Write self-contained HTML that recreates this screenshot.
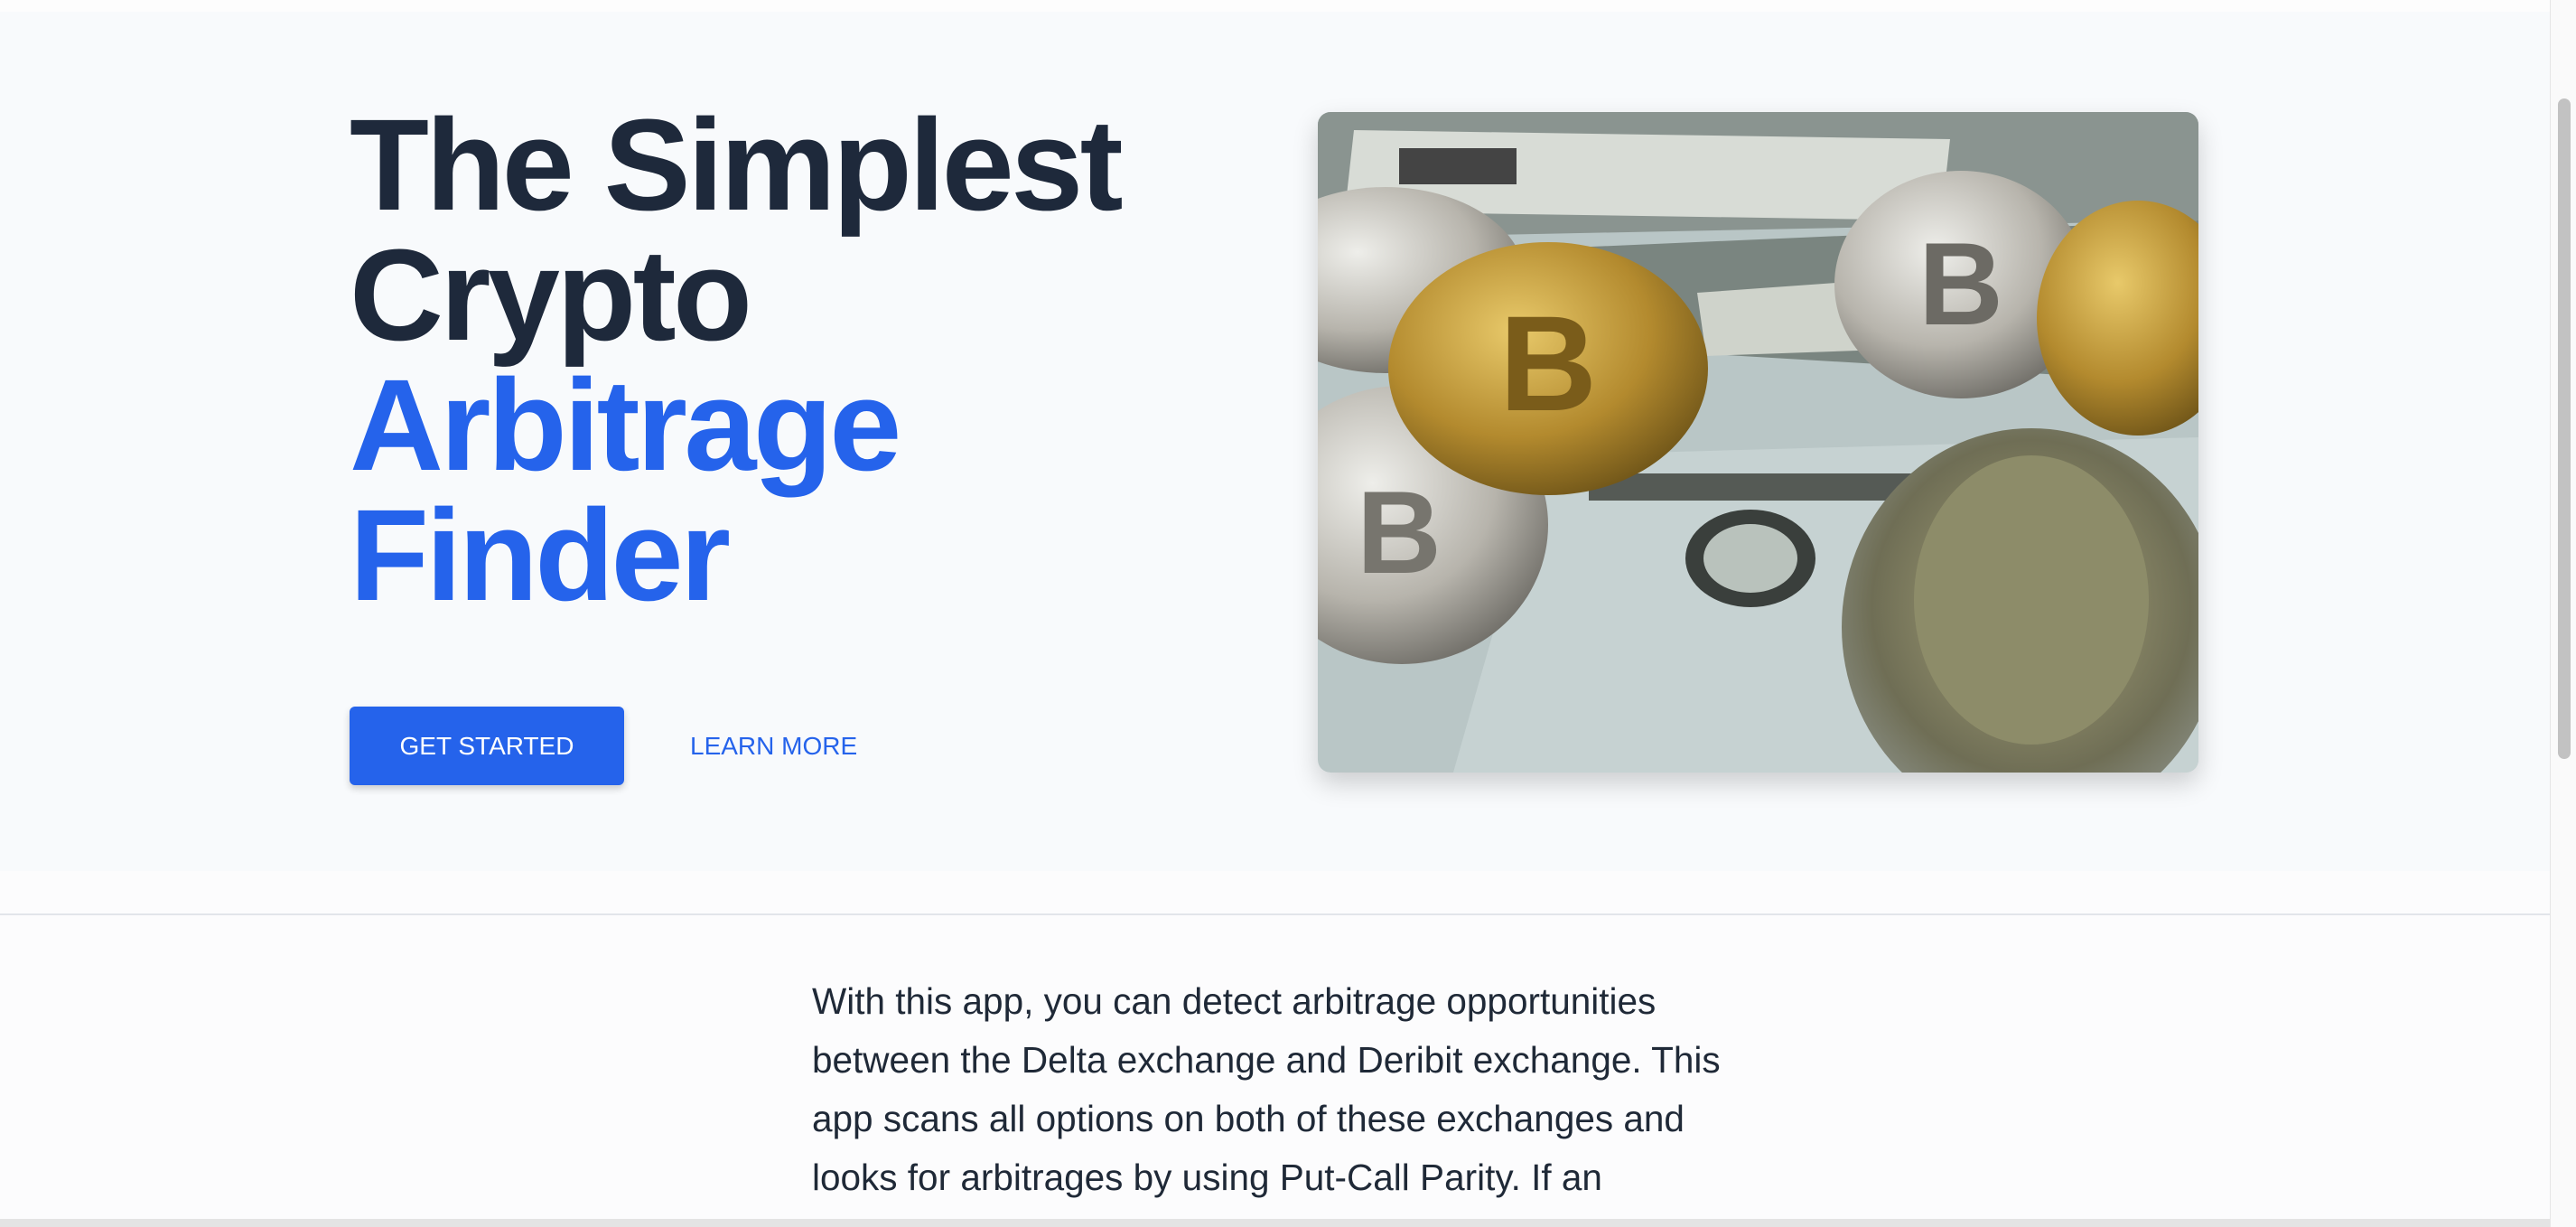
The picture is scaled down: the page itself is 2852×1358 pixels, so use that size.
<!DOCTYPE html>
<html><head><meta charset="utf-8"><style>
*{margin:0;padding:0;box-sizing:border-box}
html,body{width:2852px;height:1358px;overflow:hidden;background:#fcfcfd;font-family:"Liberation Sans",Helvetica,Arial,sans-serif}
.topstrip{position:absolute;left:0;top:0;width:2823px;height:13px;background:#fdfdfd}
.hero{position:absolute;left:0;top:13px;width:2823px;height:951px;background:#f8fafc}
h1{position:absolute;left:387px;top:111px;font-size:144px;line-height:144px;font-weight:700;letter-spacing:-3.6px;color:#1e293b;white-space:nowrap}
h1 .b{color:#2563eb}
.btn{position:absolute;left:387px;top:782px;width:304px;height:87px;background:#2563eb;border-radius:6px;box-shadow:0 4px 8px rgba(0,0,0,.18);color:#fff;font-size:28px;line-height:87px;text-align:center}
.lm{position:absolute;left:764px;top:782px;height:87px;line-height:87px;color:#2563eb;font-size:28px}
.img{position:absolute;left:1459px;top:124px;width:975px;height:731px;border-radius:14px;overflow:hidden;box-shadow:0 12px 28px rgba(0,0,0,.18)}
.line{position:absolute;left:0;top:1011px;width:2823px;height:2px;background:#e2e5ea}
p{position:absolute;left:899px;top:1076px;font-size:40.5px;line-height:65px;color:#1f2937;white-space:nowrap}
.sb{position:absolute;left:2823px;top:0;width:29px;height:1358px;background:#fafafa;border-left:1px solid #e6e6e6}
.th{position:absolute;left:2832px;top:109px;width:14px;height:731px;background:#c2c2c2;border-radius:7px}
.hb{position:absolute;left:0;top:1349px;width:2823px;height:9px;background:#e4e4e4}
</style></head><body>
<div class="topstrip"></div>
<div class="hero"></div>
<h1>The Simplest<br>Crypto<br><span class="b">Arbitrage<br>Finder</span></h1>
<div class="btn">GET STARTED</div>
<div class="lm">LEARN MORE</div>
<div class="img"><svg width="975" height="731" viewBox="0 0 975 731">
<defs>
<radialGradient id="g" cx="40%" cy="35%" r="70%"><stop offset="0" stop-color="#e8c96a"/><stop offset=".6" stop-color="#b38a2e"/><stop offset="1" stop-color="#6e5418"/></radialGradient>
<radialGradient id="s" cx="40%" cy="35%" r="70%"><stop offset="0" stop-color="#eeeeea"/><stop offset=".6" stop-color="#b7b4ac"/><stop offset="1" stop-color="#6e6c66"/></radialGradient>
<radialGradient id="f" cx="50%" cy="45%" r="60%"><stop offset="0" stop-color="#a9a57c"/><stop offset=".7" stop-color="#6f6e55"/><stop offset="1" stop-color="#8a8f86"/></radialGradient>
</defs>
<rect width="975" height="731" fill="#b9c6c6"/>
<polygon points="0,0 975,0 975,120 0,140" fill="#8a9490"/>
<polygon points="40,20 700,30 690,120 30,110" fill="#d8dcd6"/>
<rect x="90" y="40" width="130" height="40" fill="#444"/>
<polygon points="280,150 975,120 975,300 300,260" fill="#7a8580"/>
<polygon points="420,200 700,180 710,260 430,270" fill="#cfd3cb"/>
<polygon points="250,380 975,360 975,731 150,731" fill="#c6d2d2"/>
<rect x="300" y="400" width="400" height="30" fill="#555a55"/>
<ellipse cx="790" cy="570" rx="210" ry="220" fill="url(#f)"/>
<ellipse cx="790" cy="540" rx="130" ry="160" fill="#8d8c69"/>
<ellipse cx="479" cy="494" rx="72" ry="54" fill="#3a3f3c"/>
<ellipse cx="479" cy="494" rx="52" ry="38" fill="#b9c2bc"/>
<ellipse cx="75" cy="186" rx="155" ry="103" fill="url(#s)"/>
<ellipse cx="93" cy="457" rx="162" ry="154" fill="url(#s)"/>
<ellipse cx="712" cy="191" rx="140" ry="126" fill="url(#s)"/>
<ellipse cx="908" cy="228" rx="112" ry="130" fill="url(#g)"/>
<ellipse cx="255" cy="284" rx="177" ry="140" fill="url(#g)"/>
<text x="255" y="330" font-family="Liberation Sans" font-weight="700" font-size="150" fill="#7a5c1a" text-anchor="middle">B</text>
<text x="712" y="235" font-family="Liberation Sans" font-weight="700" font-size="130" fill="#6c6a64" text-anchor="middle">B</text>
<text x="90" y="510" font-family="Liberation Sans" font-weight="700" font-size="130" fill="#77756e" text-anchor="middle">B</text>
</svg></div>
<div class="line"></div>
<p>With this app, you can detect arbitrage opportunities<br>between the Delta exchange and Deribit exchange. This<br>app scans all options on both of these exchanges and<br>looks for arbitrages by using Put-Call Parity. If an</p>
<div class="sb"></div><div class="th"></div>
<div class="hb"></div>
</body></html>
